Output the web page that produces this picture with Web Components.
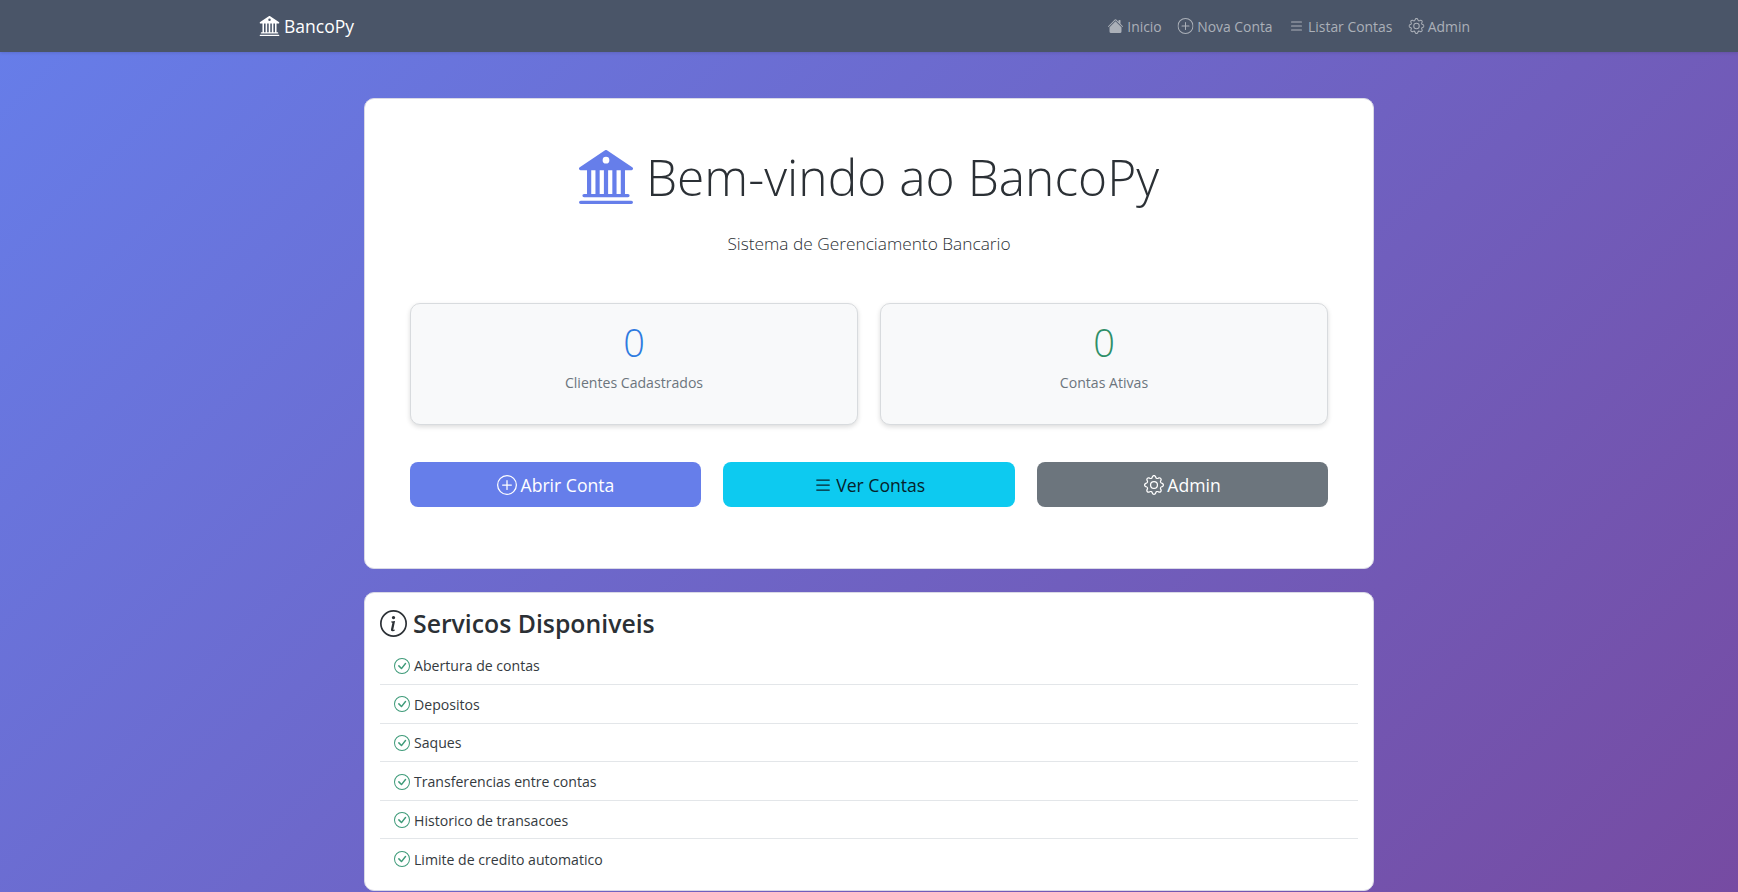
<!DOCTYPE html>
<html lang="pt">
<head>
<meta charset="utf-8">
<title>BancoPy</title>
<style>
  html, body { margin: 0; height: 892px; overflow: hidden; }
  body {
    background: linear-gradient(135deg, #667eea 0%, #764ba2 100%);
    font-family: "Open Sans", "Liberation Sans", sans-serif;
    color: #212529;
  }
</style>
</head>
<body>
<bank-nav></bank-nav>
<bank-main>
  <welcome-card>
    <stat-card slot="stats" value="0" color="#2f7be0">Clientes Cadastrados</stat-card>
    <stat-card slot="stats" value="0" color="#2f8f68">Contas Ativas</stat-card>
    <action-button slot="actions" icon="plus" bg="#667eea" fg="#fff">Abrir Conta</action-button>
    <action-button slot="actions" icon="list" bg="#0dcaf0" fg="#06222b">Ver Contas</action-button>
    <action-button slot="actions" icon="gear" bg="#6c757d" fg="#fff">Admin</action-button>
  </welcome-card>
  <services-card>
    <service-item>Abertura de contas</service-item>
    <service-item>Depositos</service-item>
    <service-item>Saques</service-item>
    <service-item>Transferencias entre contas</service-item>
    <service-item>Historico de transacoes</service-item>
    <service-item last>Limite de credito automatico</service-item>
  </services-card>
</bank-main>

<script>
// bootstrap-icons paths, all on a 16x16 box
const CIRCLE = 'M8 15A7 7 0 1 1 8 1a7 7 0 0 1 0 14m0 1A8 8 0 1 0 8 0a8 8 0 0 0 0 16';
const ICONS = {
  bank: 'M8.277.084a.5.5 0 0 0-.554 0l-7.5 5A.5.5 0 0 0 .5 6h1.875v7H1.5a.5.5 0 0 0 0 1h13a.5.5 0 1 0 0-1h-.875V6H15.5a.5.5 0 0 0 .277-.916l-7.5-5zM12.375 6v7h-1.25V6h1.25zm-2.5 0v7h-1.25V6h1.25zm-2.5 0v7h-1.25V6h1.25zm-2.5 0v7h-1.25V6h1.25zM8 4a1 1 0 1 1 0-2 1 1 0 0 1 0 2zM.5 15a.5.5 0 0 0 0 1h15a.5.5 0 1 0 0-1H.5z',
  house: 'M8.707 1.5a1 1 0 0 0-1.414 0L.646 8.146a.5.5 0 0 0 .708.708L8 2.207l6.646 6.647a.5.5 0 0 0 .708-.708L13 5.793V2.5a.5.5 0 0 0-.5-.5h-1a.5.5 0 0 0-.5.5v1.293z M8 3.293l6 6V13.5a1.5 1.5 0 0 1-1.5 1.5h-9A1.5 1.5 0 0 1 2 13.5V9.293z',
  plus: CIRCLE + ' M8 4a.5.5 0 0 1 .5.5v3h3a.5.5 0 0 1 0 1h-3v3a.5.5 0 0 1-1 0v-3h-3a.5.5 0 0 1 0-1h3v-3A.5.5 0 0 1 8 4',
  list: 'M2.5 12a.5.5 0 0 1 .5-.5h10a.5.5 0 0 1 0 1H3a.5.5 0 0 1-.5-.5m0-4a.5.5 0 0 1 .5-.5h10a.5.5 0 0 1 0 1H3a.5.5 0 0 1-.5-.5m0-4a.5.5 0 0 1 .5-.5h10a.5.5 0 0 1 0 1H3a.5.5 0 0 1-.5-.5',
  gear: 'M8 4.754a3.246 3.246 0 1 0 0 6.492 3.246 3.246 0 0 0 0-6.492zM5.754 8a2.246 2.246 0 1 1 4.492 0 2.246 2.246 0 0 1-4.492 0z M9.796 1.343c-.527-1.79-3.065-1.79-3.592 0l-.094.319a.873.873 0 0 1-1.255.52l-.292-.16c-1.64-.892-3.433.902-2.54 2.541l.159.292a.873.873 0 0 1-.52 1.255l-.319.094c-1.79.527-1.79 3.065 0 3.592l.319.094a.873.873 0 0 1 .52 1.255l-.16.292c-.892 1.64.901 3.434 2.541 2.54l.292-.159a.873.873 0 0 1 1.255.52l.094.319c.527 1.79 3.065 1.79 3.592 0l.094-.319a.873.873 0 0 1 1.255-.52l.292.16c1.64.893 3.434-.902 2.54-2.541l-.159-.292a.873.873 0 0 1 .52-1.255l.319-.094c1.79-.527 1.79-3.065 0-3.592l-.319-.094a.873.873 0 0 1-.52-1.255l.16-.292c.893-1.64-.902-3.433-2.541-2.54l-.292.159a.873.873 0 0 1-1.255-.52l-.094-.319zm-2.633.283c.246-.835 1.428-.835 1.674 0l.094.319a1.873 1.873 0 0 0 2.693 1.115l.291-.16c.764-.415 1.6.42 1.184 1.185l-.159.292a1.873 1.873 0 0 0 1.116 2.692l.318.094c.835.246.835 1.428 0 1.674l-.319.094a1.873 1.873 0 0 0-1.115 2.693l.16.291c.415.764-.42 1.6-1.185 1.184l-.291-.159a1.873 1.873 0 0 0-2.693 1.116l-.094.318c-.246.835-1.428.835-1.674 0l-.094-.319a1.873 1.873 0 0 0-2.692-1.115l-.292.16c-.764.415-1.6-.42-1.184-1.185l.159-.291A1.873 1.873 0 0 0 1.945 8.93l-.319-.094c-.835-.246-.835-1.428 0-1.674l.319-.094A1.873 1.873 0 0 0 3.06 4.377l-.16-.292c-.415-.764.42-1.6 1.185-1.184l.292.159a1.873 1.873 0 0 0 2.692-1.115l.094-.319z',
  info: CIRCLE + ' m.93-9.412-2.29.287-.082.38.45.083c.294.07.352.176.288.469l-.738 3.468c-.194.897.105 1.319.808 1.319.545 0 1.178-.252 1.465-.598l.088-.416c-.2.176-.492.246-.686.246-.275 0-.375-.193-.304-.533L8.93 6.588zM9 4.5a1 1 0 1 1-2 0 1 1 0 0 1 2 0z',
  check: CIRCLE + ' M10.97 4.97a.235.235 0 0 0-.02.022L7.477 9.417 5.384 7.323a.75.75 0 0 0-1.06 1.06L6.97 11.03a.75.75 0 0 0 1.079-.02l3.992-4.99a.75.75 0 0 0-1.071-1.05z',
};

class BankIcon extends HTMLElement {
  connectedCallback() {
    const size = this.getAttribute('size') || 16;
    const root = this.shadowRoot || this.attachShadow({mode: 'open'});
    root.innerHTML = `
      <style>
        :host { display: inline-flex; flex: none; width: ${size}px; height: ${size}px; }
        svg { display: block; width: 100%; height: 100%; fill: currentColor; }
      </style>
      <svg viewBox="0 0 16 16"><path d="${ICONS[this.getAttribute('name')]}"/></svg>`;
  }
}

class NavLink extends HTMLElement {
  constructor() {
    super();
    this.attachShadow({mode: 'open'}).innerHTML = `
      <style>
        :host { display: flex; align-items: center; gap: 3.5px; padding: 0 8px; color: #abb0b8; font-size: 13.9px; }
      </style>
      <bank-icon name="${this.getAttribute('icon')}" size="16"></bank-icon><slot></slot>`;
  }
}

class BankNav extends HTMLElement {
  constructor() {
    super();
    this.attachShadow({mode: 'open'}).innerHTML = `
      <style>
        :host { display: block; height: 52px; background: #4a5568; box-shadow: 0 1px 3px rgba(0,0,0,.12); }
        .bar { width: 1219px; height: 100%; margin: 0 auto; transform: translateX(-.5px); display: flex; align-items: center; justify-content: space-between; }
        .brand { display: flex; align-items: center; gap: 5px; color: #fff; font-size: 17.5px; }
        .links { display: flex; }
      </style>
      <div class="bar">
        <div class="brand"><bank-icon name="bank" size="20"></bank-icon>BancoPy</div>
        <div class="links">
          <nav-link icon="house">Inicio</nav-link>
          <nav-link icon="plus">Nova Conta</nav-link>
          <nav-link icon="list">Listar Contas</nav-link>
          <nav-link icon="gear">Admin</nav-link>
        </div>
      </div>`;
  }
}

class BankMain extends HTMLElement {
  constructor() {
    super();
    this.attachShadow({mode: 'open'}).innerHTML = `
      <style>
        :host { display: flex; flex-direction: column; gap: 23px; width: 1010px; margin: 46px auto 0; }
      </style>
      <slot></slot>`;
  }
}

class WelcomeCard extends HTMLElement {
  constructor() {
    super();
    this.attachShadow({mode: 'open'}).innerHTML = `
      <style>
        :host { display: block; box-sizing: border-box; height: 471px; padding: 48px 45px 0; background: #fff; border: 1px solid #d9d9e6; border-radius: 10px; }
        h1 { margin: 0; display: flex; justify-content: center; align-items: center; gap: 13px; height: 60px; font-size: 49.7px; font-weight: 300; color: #2b3035; white-space: nowrap; }
        h1 bank-icon { color: #667eea; margin-top: -1px; }
        p { margin: 21px 0 0; height: 32px; line-height: 32px; text-align: center; font-size: 17.3px; font-weight: 300; color: #2b3035; }
        .stats { display: grid; grid-template-columns: 1fr 1fr; gap: 22px; margin-top: 43px; }
        .actions { display: grid; grid-template-columns: repeat(3, 1fr); gap: 22px; margin-top: 37px; }
      </style>
      <h1><bank-icon name="bank" size="54"></bank-icon>Bem-vindo ao BancoPy</h1>
      <p>Sistema de Gerenciamento Bancario</p>
      <div class="stats"><slot name="stats"></slot></div>
      <div class="actions"><slot name="actions"></slot></div>`;
  }
}

class StatCard extends HTMLElement {
  constructor() {
    super();
    this.attachShadow({mode: 'open'}).innerHTML = `
      <style>
        :host { display: block; box-sizing: border-box; height: 122px; padding-top: 14px; background: #f8f9fa; border: 1px solid #d8dbde; border-radius: 10px; box-shadow: 0 2px 5px rgba(0,0,0,.14); text-align: center; }
        .num { height: 48px; line-height: 48px; font-size: 38px; font-weight: 300; color: ${this.getAttribute('color')}; }
        .label { margin-top: 5px; height: 24px; line-height: 24px; font-size: 14.1px; color: #6c757d; }
      </style>
      <div class="num">${this.getAttribute('value')}</div>
      <div class="label"><slot></slot></div>`;
  }
}

class ActionButton extends HTMLElement {
  constructor() {
    super();
    this.attachShadow({mode: 'open'}).innerHTML = `
      <style>
        :host { display: flex; align-items: center; justify-content: center; gap: 3.5px; height: 45px; border-radius: 8px; font-size: 17.6px; background: ${this.getAttribute('bg')}; color: ${this.getAttribute('fg')}; }
      </style>
      <bank-icon name="${this.getAttribute('icon')}" size="20"></bank-icon><slot></slot>`;
  }
}

class ServicesCard extends HTMLElement {
  constructor() {
    super();
    this.attachShadow({mode: 'open'}).innerHTML = `
      <style>
        :host { display: block; box-sizing: border-box; height: 299px; padding: 13px 15px 0; background: #fff; border: 1px solid #d9d9e6; border-radius: 10px; }
        h3 { margin: 0; display: flex; align-items: center; gap: 6px; height: 34px; font-size: 24.8px; font-weight: 600; color: #2b3035; }
        ul { margin: 6.5px 0 0; padding: 0; list-style: none; }
      </style>
      <h3><bank-icon name="info" size="27"></bank-icon>Servicos Disponiveis</h3>
      <ul><slot></slot></ul>`;
  }
}

class ServiceItem extends HTMLElement {
  constructor() {
    super();
    this.attachShadow({mode: 'open'}).innerHTML = `
      <style>
        :host { display: flex; align-items: center; gap: 4px; box-sizing: border-box; height: 38.6px; padding: 1px 14px 0; font-size: 14.1px; color: #343a40; border-bottom: 1px solid #e3e6e9; }
        :host([last]) { border-bottom: 0; }
        bank-icon { color: #3d9a78; }
      </style>
      <bank-icon name="check" size="16"></bank-icon><slot></slot>`;
  }
}

customElements.define('bank-icon', BankIcon);
customElements.define('nav-link', NavLink);
customElements.define('bank-nav', BankNav);
customElements.define('bank-main', BankMain);
customElements.define('welcome-card', WelcomeCard);
customElements.define('stat-card', StatCard);
customElements.define('action-button', ActionButton);
customElements.define('services-card', ServicesCard);
customElements.define('service-item', ServiceItem);
</script>
</body>
</html>
